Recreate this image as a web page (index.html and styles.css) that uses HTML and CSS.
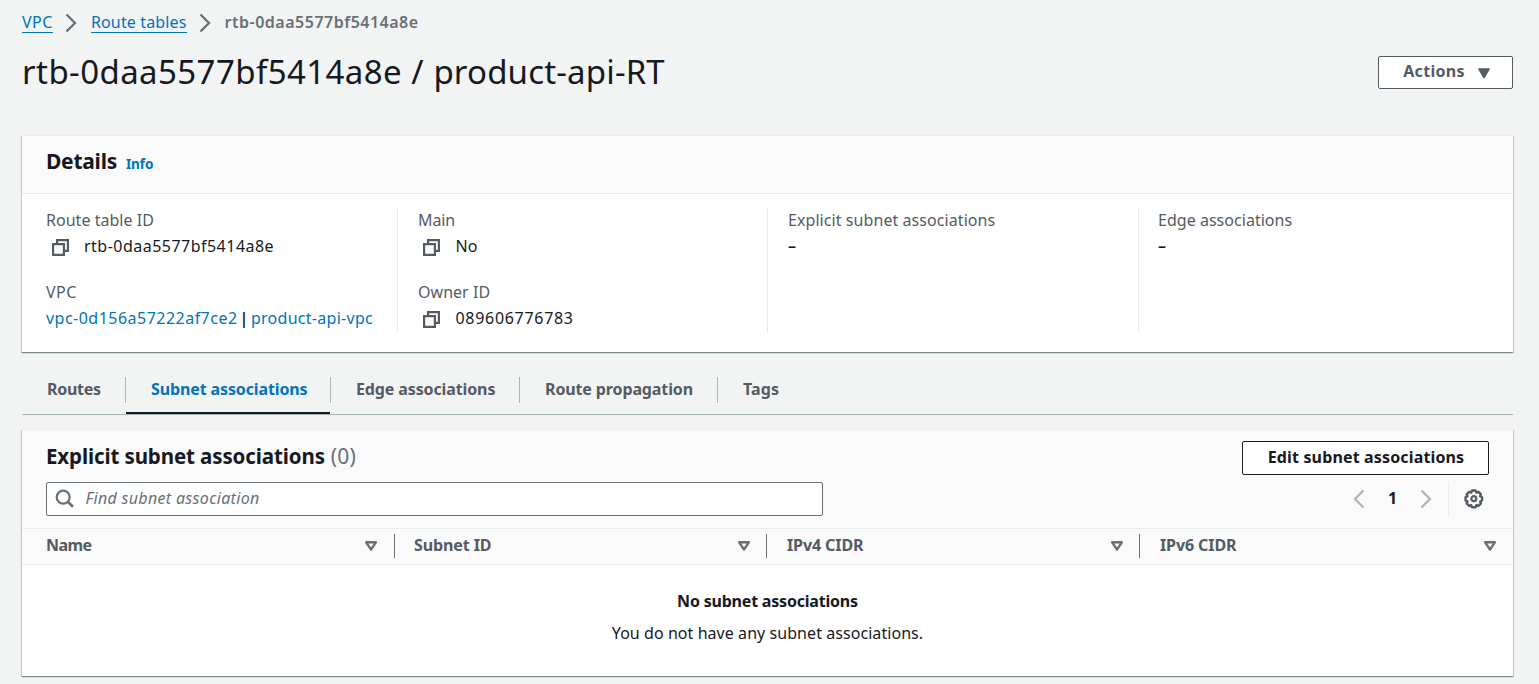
FILE: index.html
```html
<!DOCTYPE html>
<html lang="en">
<head>
<meta charset="utf-8">
<title>Route table details</title>
<link rel="stylesheet" href="styles.css">
</head>
<body>
<svg class="defs" width="0" height="0">
  <symbol id="copy" viewBox="0 0 17 17"><path d="M5.100 4V1.100h10.800v10.800H13M1.100 5.100h10.800v10.800H1.100z" fill="none" stroke="currentColor" stroke-width="2.200"/></symbol>
  <symbol id="chev" viewBox="0 0 12 20"><path d="M1.500 1.500l8.500 8.500-8.500 8.500" fill="none" stroke="currentColor" stroke-width="2.300"/></symbol>
  <symbol id="sort" viewBox="0 0 14 12"><path d="M2.200 2.300h9.600L7 9.600z" fill="none" stroke="currentColor" stroke-width="2.400" stroke-linejoin="round"/></symbol>
</svg>
<main class="page">
  <nav class="crumbs">
    <a class="crumb crumb-vpc">VPC</a>
    <svg class="chev" width="12" height="20"><use href="#chev"/></svg>
    <a class="crumb crumb-rt">Route tables</a>
    <svg class="chev" width="12" height="20"><use href="#chev"/></svg>
    <span class="crumb-current">rtb-0daa5577bf5414a8e</span>
  </nav>
  <header class="title-row">
    <h1 class="title"><span class="title-id">rtb-0daa5577bf5414a8e</span> / <span class="title-name">product-api-RT</span></h1>
    <button class="btn actions"><span>Actions</span><svg width="14" height="12" viewBox="0 0 14 12"><path d="M2 2h10L7 10.500z" fill="currentColor" stroke="currentColor" stroke-width="1.600" stroke-linejoin="round"/></svg></button>
  </header>

  <section class="panel details">
    <div class="details-head"><h2>Details</h2><a class="info">Info</a></div>
    <div class="grid">
      <div class="col">
        <div class="pair"><span class="label">Route table ID</span><div class="value"><svg class="copy" width="17" height="17"><use href="#copy"/></svg><span class="v-id">rtb-0daa5577bf5414a8e</span></div></div>
        <div class="pair"><span class="label l-vpc">VPC</span><div class="value"><a class="v-id">vpc-0d156a57222af7ce2</a><span class="bar">|</span><a class="v-api">product-api-vpc</a></div></div>
      </div>
      <div class="col">
        <div class="pair"><span class="label l-main">Main</span><div class="value"><svg class="copy" width="17" height="17"><use href="#copy"/></svg><span>No</span></div></div>
        <div class="pair"><span class="label">Owner ID</span><div class="value"><svg class="copy" width="17" height="17"><use href="#copy"/></svg><span class="v-owner">089606776783</span></div></div>
      </div>
      <div class="col"><div class="pair"><span class="label l-exp">Explicit subnet associations</span><div class="value dash">–</div></div></div>
      <div class="col"><div class="pair"><span class="label">Edge associations</span><div class="value dash">–</div></div></div>
    </div>
  </section>

  <nav class="tabs">
    <a class="tab t1"><span>Routes</span></a>
    <a class="tab t2 active"><span>Subnet associations</span></a>
    <a class="tab t3"><span>Edge associations</span></a>
    <a class="tab t4"><span>Route propagation</span></a>
    <a class="tab t5"><span>Tags</span></a>
  </nav>

  <section class="panel assoc">
    <div class="assoc-head">
      <div class="assoc-title"><h2 class="h-exp">Explicit subnet associations</h2><span class="count">(0)</span><button class="btn edit">Edit subnet associations</button></div>
      <div class="tools">
        <div class="search"><svg width="20" height="20" viewBox="0 0 20 20"><circle cx="8.200" cy="8.200" r="6.500" fill="none" stroke="currentColor" stroke-width="2.200"/><path d="M12.800 12.800l5.200 5" stroke="currentColor" stroke-width="2.600"/></svg><span>Find subnet association</span></div>
        <div class="pager"><svg class="prev" width="12" height="20"><use href="#chev"/></svg><span class="num">1</span><svg width="12" height="20"><use href="#chev"/></svg></div>
        <div class="gear"><svg width="20" height="20" viewBox="0 0 20 20" fill="none" stroke="currentColor" stroke-width="2.200"><path d="M8.300 1.400h3.400l.7 1.900 1.900-.8 2.400 2.400-.9 1.800 1.900.8v3.200l-1.900.9.9 1.800-2.400 2.400-1.900-.8-.7 2H8.300l-.7-2-1.900.8-2.400-2.400.9-1.800-1.900-.9V7.500l1.900-.8-.9-1.800 2.400-2.400 1.900.8z" transform="translate(-.9 .05) scale(1.070)" stroke-linejoin="round"/><circle cx="9.800" cy="9.700" r="2.500"/></svg></div>
      </div>
    </div>
    <div class="thead">
      <div class="th th-name"><span>Name</span><svg width="14" height="12"><use href="#sort"/></svg></div>
      <div class="th"><span>Subnet ID</span><svg width="14" height="12"><use href="#sort"/></svg></div>
      <div class="th th-ip"><span>IPv4 CIDR</span><svg width="14" height="12"><use href="#sort"/></svg></div>
      <div class="th th-ip"><span>IPv6 CIDR</span><svg width="14" height="12"><use href="#sort"/></svg></div>
    </div>
    <div class="empty"><strong>No subnet associations</strong><p>You do not have any subnet associations.</p></div>
  </section>
</main>
</body>
</html>
```
FILE: styles.css
```css
* { box-sizing: border-box; }
body { margin: 0; background: #f2f3f3; color: #16191f; font: 16px/24px "Noto Sans", "Open Sans", sans-serif; }
h1, h2, p { margin: 0; }
svg { display: block; flex: none; }
a { color: #0073bb; }
.defs { position: absolute; }
.page { width: 1539px; height: 684px; overflow: hidden; padding: 0 26px 0 22px; white-space: nowrap; }

/* Breadcrumbs and title */
.crumbs { display: flex; align-items: center; height: 44px; color: #687078; }
.crumb { border-bottom: 1px solid #0073bb; line-height: 20px; }
.crumb-vpc { letter-spacing: .5px; }
.crumb-rt { letter-spacing: .15px; }
.chev { margin: 2px 13.500px 0 12.500px; }
.crumb-current { font-weight: 600; letter-spacing: .5px; }
.title-row { display: flex; justify-content: space-between; height: 91px; padding-top: 12px; }
.title { margin-top: -1px; font-size: 33px; line-height: 34px; font-weight: 400; letter-spacing: .6px; }
.title-id { letter-spacing: .42px; }
.title-name { letter-spacing: .17px; }
.btn { display: flex; align-items: center; justify-content: center; background: #fff; border: 1px solid #545b64; border-radius: 2px; font: 700 16px/22px "Noto Sans", sans-serif; color: #545b64; padding: 0; }
.actions { width: 135px; height: 33px; padding-left: 3px; gap: 12px; letter-spacing: .3px; }
.actions span { margin-top: -3px; }

/* Panels */
.panel { background: #fff; box-shadow: 0 1px 1px 0 rgba(0,28,36,.3), 1px 1px 1px 0 rgba(0,28,36,.15), -1px 1px 1px 0 rgba(0,28,36,.15); border-top: 1px solid #eaeded; }
.details { height: 217px; }
.details-head { display: flex; align-items: baseline; height: 58px; padding: 11px 24px; gap: 9px; background: #fafafa; border-bottom: 1px solid #eaeded; }
h2 { font-size: 21px; line-height: 28px; font-weight: 700; letter-spacing: -.25px; }
.info { font-size: 13.500px; font-weight: 700; letter-spacing: -.1px; }
.grid { display: grid; grid-template-columns: 351px 370px 371px 1fr; grid-template-rows: 125px; margin: 14px 24px 0; }
.col + .col { border-left: 1px solid #eaeded; padding-left: 20px; }
.col:last-child { padding-left: 19px; }
.pair { height: 72px; }
.label { display: block; height: 25px; color: #545b64; letter-spacing: .03px; }
.l-vpc { letter-spacing: .5px; }
.l-main { letter-spacing: -.1px; }
.l-exp { letter-spacing: .07px; }
.value { display: flex; align-items: center; height: 26px; }
.dash { font-weight: 600; }
.copy { color: #545b64; margin: 3px 15px 0 6px; }
.col + .col .copy { margin-left: 5px; margin-right: 15.500px; }
.v-id { letter-spacing: .48px; }
.v-api { letter-spacing: .28px; }
.v-owner { letter-spacing: .7px; }
.bar { margin: 0 2.500px 0 2px; font-weight: 600; }

/* Tabs */
.tabs { display: flex; height: 63px; padding-top: 25px; border-bottom: 1px solid #aab7b8; }
.tab { height: 37px; font-weight: 700; color: #545b64; letter-spacing: -.12px; }
.tab span { display: block; height: 26px; padding-left: 25px; border-right: 1px solid #aab7b8; }
.t1 { width: 104px; letter-spacing: -.3px; }
.t2 { width: 205px; }
.t3 { width: 189px; }
.t4 { width: 198px; }
.t5 { letter-spacing: .1px; }
.t5 span { border-right: 0; }
.active { color: #0073bb; background: linear-gradient(#16191f, #16191f) 0 100% / calc(100% - 1px) 2px no-repeat; }

/* Associations table */
.assoc { height: 247px; margin-top: 14px; }
.assoc-head { height: 99px; background: #fafafa; padding: 11px 24px 0; border-bottom: 1px solid #eaeded; }
.assoc-title { display: flex; height: 41px; }
.h-exp { margin-top: 1px; font-size: 20.500px; letter-spacing: -.11px; }
.count { margin: 1px 0 0 6px; font-size: 21px; line-height: 28px; color: #687078; letter-spacing: .2px; }
.edit { margin-left: auto; width: 247px; height: 34px; padding: 0 0 3px 1px; color: #16191f; border-color: #16191f; letter-spacing: .15px; }
.tools { display: flex; height: 34px; }
.search { display: flex; align-items: center; width: 777px; padding-left: 8px; background: #fff; border: 1px solid #687078; border-radius: 2px; color: #687078; font-style: italic; letter-spacing: .32px; }
.search span { margin: -2px 0 0 10.500px; }
.pager { display: flex; align-items: center; margin-left: auto; margin-right: 16px; color: #aab7b8; }
.prev { transform: scaleX(-1); }
.num { width: 55px; margin-top: -2px; text-align: center; font-weight: 700; color: #16191f; }
.gear { display: flex; align-items: center; width: 41px; padding-left: 15px; border-left: 1px solid #eaeded; color: #545b64; }
.thead { display: grid; grid-template-columns: 373px 372px 373px 373px; height: 36px; padding-top: 5px; background: #fafafa; border-bottom: 1px solid #eaeded; }
.th { display: flex; align-items: center; justify-content: space-between; height: 24px; padding: 0 15.500px 0 19px; border-right: 1px solid #687078; font-weight: 700; color: #545b64; letter-spacing: -.1px; }
.th-name { padding: 0 16.500px 0 24px; letter-spacing: -.6px; }
.th-ip { padding-left: 20px; }
.th:last-child { border-color: transparent; }
.th span { margin-top: -2px; }
.th svg { color: #687078; margin-top: -1px; }
.empty { padding-top: 24px; text-align: center; }
.empty strong { display: block; letter-spacing: -.2px; }
.empty p { margin-top: 8px; letter-spacing: .06px; }
```
